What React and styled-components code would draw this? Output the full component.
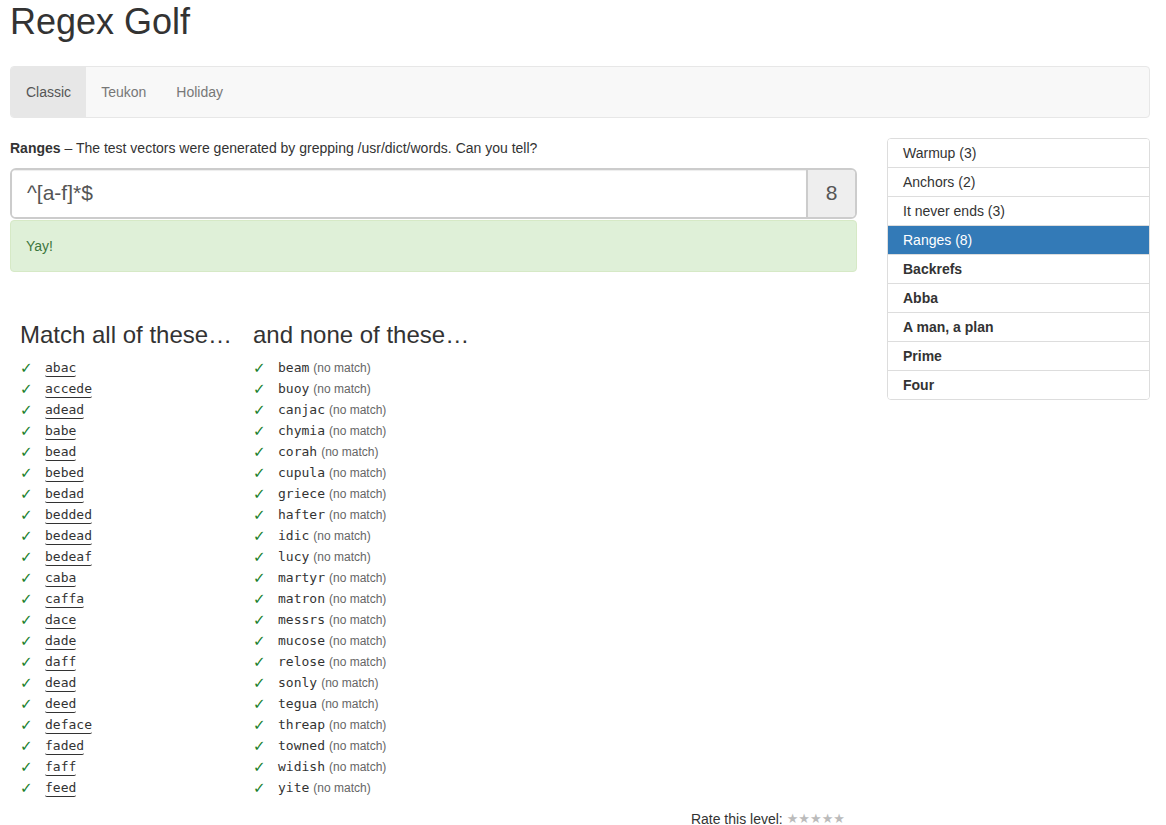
import React from 'react';
import styled, { createGlobalStyle } from 'styled-components';

const GlobalStyle = createGlobalStyle`
	body {
		margin: 0;
		background: #fff;
		color: #333;
		font-family: "Liberation Sans", Arial, sans-serif;
		font-size: 14px;
		line-height: 1.42857;
	}
	* {
		box-sizing: border-box;
	}
`;

const Page = styled.div`
	width: 1150px;
	padding: 2px 0 0 10px;
`;

const Title = styled.h1`
	margin: 0 0 24px;
	font-size: 36px;
	font-weight: 400;
	line-height: 1.1;
	color: #333;
`;

const Navbar = styled.nav`
	display: flex;
	height: 52px;
	margin-bottom: 20px;
	background: #f8f8f8;
	border: 1px solid #e7e7e7;
	border-radius: 4px;
	overflow: hidden;
`;

const NavLink = styled.a`
	padding: 15px;
	line-height: 20px;
	color: ${(p) => (p.$active ? '#555' : '#777')};
	background: ${(p) => (p.$active ? '#e7e7e7' : 'transparent')};
	text-decoration: none;
`;

const Row = styled.div`
	display: grid;
	grid-template-columns: 847px 263px;
	column-gap: 30px;
	align-items: start;
`;

const Main = styled.div`
	display: flex;
	flex-direction: column;
`;

const Description = styled.p`
	margin: 0 0 10px;
	font-size: 14px;
	line-height: 20px;
`;

const InputGroup = styled.div`
	display: flex;
	height: 51px;
	border: 2px solid #ccc;
	border-radius: 6px;
	overflow: hidden;
`;

const RegexInput = styled.div`
	flex: 1;
	padding: 0 15px;
	display: flex;
	align-items: center;
	font-size: 21px;
	color: #555;
	background: #fff;
	box-shadow: inset 0 1px 1px rgba(0, 0, 0, 0.075);
`;

const Addon = styled.div`
	width: 49px;
	display: flex;
	align-items: center;
	justify-content: center;
	font-size: 21px;
	color: #555;
	background: #eee;
	border-left: 2px solid #ccc;
`;

const Alert = styled.div`
	margin-top: 1px;
	padding: 15px;
	line-height: 20px;
	color: #3c763d;
	background: #dff0d8;
	border: 1px solid #d6e9c6;
	border-radius: 4px;
`;

const Columns = styled.div`
	display: grid;
	grid-template-columns: 233px 233px;
	padding: 50px 0 0 10px;
`;

const Heading = styled.h3`
	margin: 0 0 10px;
	font-size: 24px;
	font-weight: 400;
	line-height: 1.1;
	color: #333;
	white-space: nowrap;
`;

const WordList = styled.ul`
	list-style: none;
	margin: 0;
	padding: 0;
`;

const WordItem = styled.li`
	display: flex;
	align-items: center;
	height: 21px;
`;

const Check = styled.span`
	width: 25px;
	font-family: "DejaVu Sans", sans-serif;
	font-size: 15px;
	font-weight: 700;
	color: #1a7f2a;
`;

const Word = styled.span`
	font-family: "DejaVu Sans Mono", monospace;
	font-size: 13px;
	line-height: 16px;
	color: #333;
	border-bottom: ${(p) => (p.$underline ? '1px solid #333' : 'none')};
	border-radius: 2px;
`;

const NoMatch = styled.span`
	margin-left: 4px;
	font-size: 12px;
	color: #666;
`;

const Rating = styled.div`
	display: flex;
	justify-content: flex-end;
	align-items: center;
	gap: 4px;
	padding: 10px 12px 0 0;
	line-height: 20px;
`;

const Stars = styled.span`
	font-family: "DejaVu Sans", sans-serif;
	font-size: 13px;
	color: #bbb;
`;

const LevelList = styled.div`
	border: 1px solid #ddd;
	border-radius: 4px;
	overflow: hidden;
`;

const LevelItem = styled.div`
	padding: 4px 15px;
	line-height: 20px;
	font-weight: ${(p) => (p.$locked ? 700 : 400)};
	color: ${(p) => (p.$active ? '#fff' : '#333')};
	background: ${(p) => (p.$active ? '#337ab7' : '#fff')};
	border-top: ${(p) => (p.$first ? 'none' : '1px solid #ddd')};
`;

const matches = [
	'abac', 'accede', 'adead', 'babe', 'bead', 'bebed', 'bedad', 'bedded', 'bedead', 'bedeaf', 'caba',
	'caffa', 'dace', 'dade', 'daff', 'dead', 'deed', 'deface', 'faded', 'faff', 'feed',
];

const nonMatches = [
	'beam', 'buoy', 'canjac', 'chymia', 'corah', 'cupula', 'griece', 'hafter', 'idic', 'lucy', 'martyr',
	'matron', 'messrs', 'mucose', 'relose', 'sonly', 'tegua', 'threap', 'towned', 'widish', 'yite',
];

const levels = [
	{ name: 'Warmup (3)' },
	{ name: 'Anchors (2)' },
	{ name: 'It never ends (3)' },
	{ name: 'Ranges (8)', active: true },
	{ name: 'Backrefs', locked: true },
	{ name: 'Abba', locked: true },
	{ name: 'A man, a plan', locked: true },
	{ name: 'Prime', locked: true },
	{ name: 'Four', locked: true },
];

function App() {
	return (
		<Page>
			<GlobalStyle />
			<Title>Regex Golf</Title>
			<Navbar>
				<NavLink $active>Classic</NavLink>
				<NavLink>Teukon</NavLink>
				<NavLink>Holiday</NavLink>
			</Navbar>
			<Row>
				<Main>
					<Description>
						<b>Ranges</b> – The test vectors were generated by grepping /usr/dict/words. Can you tell?
					</Description>
					<InputGroup>
						<RegexInput>^[a-f]*$</RegexInput>
						<Addon>8</Addon>
					</InputGroup>
					<Alert>Yay!</Alert>
					<Columns>
						<div>
							<Heading>Match all of these…</Heading>
							<WordList>
								{matches.map((w) => (
									<WordItem key={w}>
										<Check>✓</Check>
										<Word $underline>{w}</Word>
									</WordItem>
								))}
							</WordList>
						</div>
						<div>
							<Heading>and none of these…</Heading>
							<WordList>
								{nonMatches.map((w) => (
									<WordItem key={w}>
										<Check>✓</Check>
										<Word>{w}</Word>
										<NoMatch>(no match)</NoMatch>
									</WordItem>
								))}
							</WordList>
						</div>
					</Columns>
					<Rating>
						Rate this level: <Stars>★★★★★</Stars>
					</Rating>
				</Main>
				<LevelList>
					{levels.map((l, i) => (
						<LevelItem key={l.name} $first={i === 0} $active={l.active} $locked={l.locked}>
							{l.name}
						</LevelItem>
					))}
				</LevelList>
			</Row>
		</Page>
	);
}

export default App;
